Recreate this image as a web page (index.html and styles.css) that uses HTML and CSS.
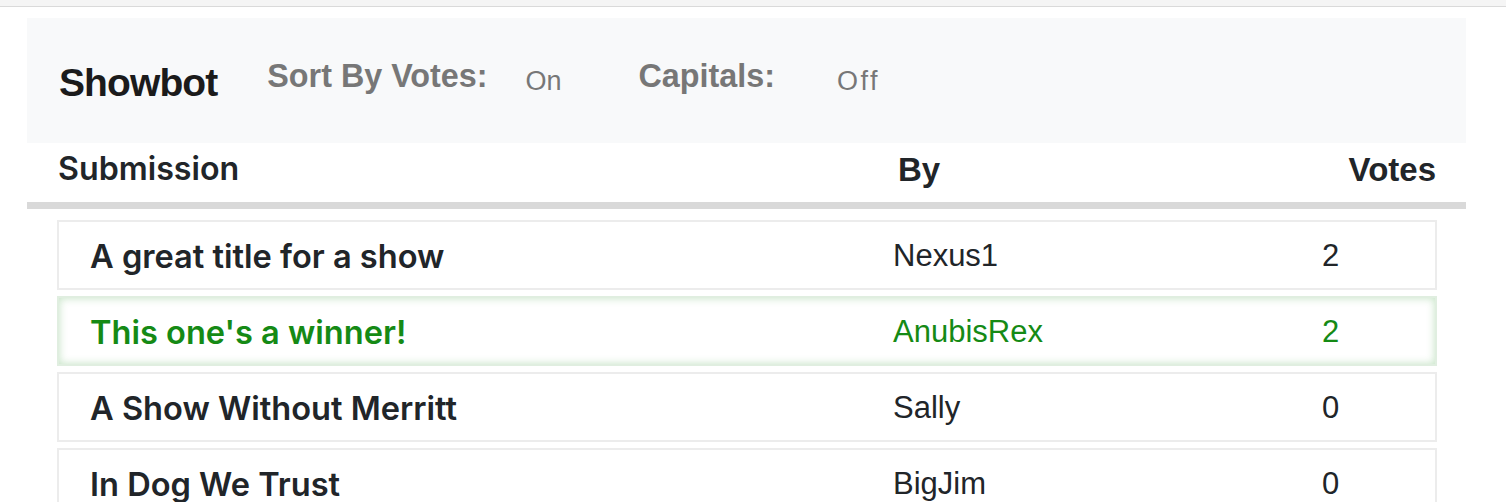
FILE: index.html
```html
<!DOCTYPE html>
<html>
<head>
<meta charset="utf-8">
<link rel="stylesheet" href="styles.css">
</head>
<body>
<div class="topbar"></div>
<div class="page">
  <nav class="navbar">
    <span class="brand">Showbot</span>
    <span class="label label-sort">Sort By Votes:</span>
    <span class="value value-on">On</span>
    <span class="label label-caps">Capitals:</span>
    <span class="value value-off">Off</span>
  </nav>
  <div class="thead">
    <span class="th th-sub">Submission</span>
    <span class="th th-by">By</span>
    <span class="th th-votes">Votes</span>
  </div>
  <div class="rows">
    <div class="row">
      <span class="title">A great title for a show</span>
      <span class="author">Nexus1</span>
      <span class="votes">2</span>
    </div>
    <div class="row row-winner">
      <span class="title">This one's a winner!</span>
      <span class="author">AnubisRex</span>
      <span class="votes">2</span>
    </div>
    <div class="row">
      <span class="title">A Show Without Merritt</span>
      <span class="author">Sally</span>
      <span class="votes">0</span>
    </div>
    <div class="row">
      <span class="title">In Dog We Trust</span>
      <span class="author">BigJim</span>
      <span class="votes">0</span>
    </div>
  </div>
</div>
</body>
</html>
```
FILE: styles.css
```css
* { box-sizing: border-box; }
html, body { margin: 0; padding: 0; background: #fff; }
body {
  font-family: "Liberation Sans", Arial, sans-serif;
  color: #212529;
  overflow: hidden;
  height: 502px;
}
.topbar {
  height: 7px;
  background: #f5f5f5;
  border-bottom: 1px solid #dadada;
}
.page {
  padding: 11px 40px 0 27px;
}
.navbar {
  height: 125px;
  background: #f8f9fa;
  display: flex;
  align-items: flex-start;
  padding-left: 32px;
}
.brand {
  font-size: 39px;
  font-weight: 700;
  letter-spacing: -0.9px;
  line-height: 1;
  color: #1b1b1b;
  margin-top: 45px;
}
.label {
  font-size: 32.3px;
  font-weight: 700;
  line-height: 1;
  color: #777;
  margin-top: 42px;
}
.value {
  font-size: 27px;
  line-height: 1;
  color: #777;
  margin-top: 50px;
}
.label-sort { margin-left: 50px; }
.value-on { margin-left: 38px; }
.label-caps { margin-left: 77px; }
.value-off { margin-left: 62px; letter-spacing: 2.5px; }

.thead {
  height: 66px;
  border-bottom: 7px solid #d9d9d9;
  display: grid;
  grid-template-columns: 840px 1fr auto;
  align-items: flex-start;
  padding: 10px 30px 0 31px;
}
.th {
  font-size: 33px;
  font-weight: 700;
  line-height: 1;
  color: #212529;
}
.th-sub {
  font-family: "Inter", sans-serif;
  font-weight: 600;
  font-size: 32.2px;
}
.rows {
  padding: 11px 29px 0 30px;
  display: flex;
  flex-direction: column;
  gap: 6px;
}
.row {
  height: 70px;
  border: 2px solid #ececec;
  display: grid;
  grid-template-columns: 803px 429px 1fr;
  align-items: center;
  padding: 2px 0 0 31px;
}
.title {
  font-family: "Inter", sans-serif;
  font-weight: 600;
  font-size: 32.6px;
}
.author, .votes {
  font-size: 31px;
}
.row-winner {
  border-color: #e0eee0;
  box-shadow: inset 0 0 9px rgba(40, 150, 40, 0.28);
  color: #158a15;
}
```
